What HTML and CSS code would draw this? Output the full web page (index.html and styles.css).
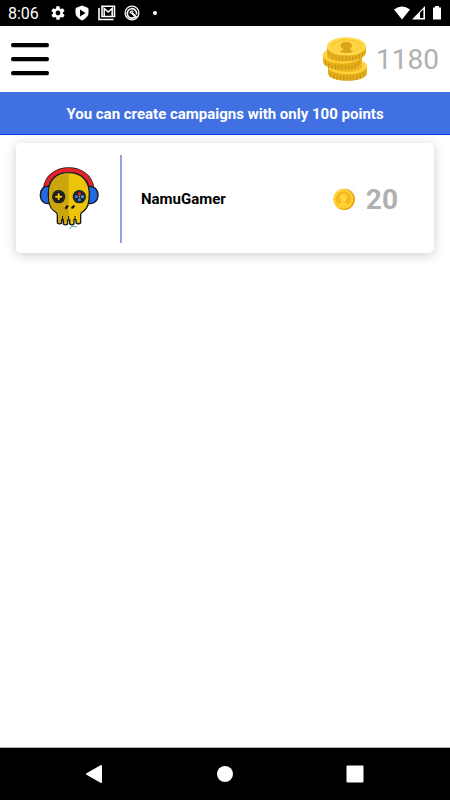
FILE: index.html
```html
<!DOCTYPE html>
<html lang="en">
<head>
<meta charset="utf-8">
<meta name="viewport" content="width=device-width, initial-scale=1">
<title>Campaigns</title>
<link rel="stylesheet" href="styles.css">
</head>
<body>
<div class="status">
  <span class="clock">8:06</span>
  <svg width="16" height="16" viewBox="0 0 24 24" fill="#fff" aria-hidden="true"><path d="M19.4 13c0-.3.1-.6.1-1s0-.7-.1-1l2.100-1.600c.2-.2.200-.4.100-.6l-2-3.500c-.1-.2-.4-.3-.6-.2l-2.500 1c-.5-.4-1.100-.7-1.700-1l-.4-2.600c0-.3-.2-.5-.4-.5h-4c-.3 0-.5.2-.5.400l-.4 2.700c-.6.200-1.100.6-1.700 1l-2.500-1c-.2-.1-.5 0-.6.200l-2 3.500c-.1.200-.1.500.1.600L4.600 11c-.1.300-.1.600-.1 1s0 .7.100 1l-2.100 1.600c-.2.200-.2.400-.1.600l2 3.500c.1.200.4.300.6.200l2.500-1c.5.400 1.100.7 1.700 1l.4 2.600c0 .3.200.5.500.5h4c.2 0 .4-.2.400-.4l.4-2.700c.6-.2 1.200-.6 1.700-1l2.500 1c.2.100.5 0 .6-.2l2-3.500c.1-.2.100-.5-.1-.6zM12 15.600a3.600 3.600 0 1 1 0-7.200 3.600 3.600 0 0 1 0 7.200z"/></svg>
  <svg width="16" height="16" viewBox="0 0 16 16" aria-hidden="true"><path d="M8 1l6 2.400V8c0 3-2.500 5.500-6 7-3.500-1.500-6-4-6-7V3.400z" fill="#fff" stroke="#fff" stroke-linejoin="round"/><path d="M6 4.500v7l5.500-3.500z" fill="#000"/></svg>
  <svg width="18" height="16" viewBox="0 0 18 16" fill="none" stroke="#fff" aria-hidden="true"><path d="M1 3v11.500h14.500" stroke-width="1.600"/><path d="M4 1.200h12.500v10.300H4z" stroke-width="1.600"/><path d="M6.200 11V3.500l4 3.600 4-3.600V11" stroke-width="1.500"/></svg>
  <svg width="16" height="16" viewBox="0 0 16 16" fill="none" stroke="#fff" aria-hidden="true"><circle cx="8" cy="8" r="6.900" stroke-width="1.300"/><path d="M11.300 11.700A4.700 4.700 0 1 1 12.500 9.500" stroke-width="1.700"/><path d="M6 8.500a2.200 2.200 0 0 1 3.500-2" stroke-width="1.200"/><path d="M7.500 7.500l5 5" stroke-width="2"/></svg>
  <span class="dot"></span>
  <svg class="signals" width="48" height="16" viewBox="0 0 48 16" fill="#fff" aria-hidden="true"><path d="M0 4.400Q8-1.600 16 4.400L8 14.500z"/><path d="M31 1v13.500H18z"/><path d="M26 7.700l3.400-3.400V13H26z" fill="#000"/><path d="M41 1h4v1.500h2v12h-8v-12h2z"/></svg>
</div>
<header class="header">
  <button class="menu" aria-label="Open menu"><span></span><span></span><span></span></button>
  <div class="balance">
    <svg width="46" height="46" viewBox="0 0 138 138" role="img" aria-label="Points">
      <path d="M18 90v20c0 32 117 32 117 0V90z" fill="#e4ae19"/>
      <path d="M25 111v13m10-9v14m10-12v14m10-12v14m10-13v14m10-14v14m10-14v14m10-15v14m10-15v14m10-17v14m10-22v13" stroke="#c8951a" stroke-width="3"/>
      <ellipse cx="76" cy="91" rx="59" ry="24" fill="#ffd23d"/><ellipse cx="76" cy="91" rx="45" ry="17" fill="#efb71d"/>
      <path d="M3 58v18c0 33 117 33 117 0V58z" fill="#e4ae19"/>
      <path d="M10 77v12m10-6v13m10-10v14m10-13v14m10-13v14m10-13v14m10-14v14m10-14v14m10-16v14m10-18v14m10-22v13" stroke="#c8951a" stroke-width="3"/>
      <ellipse cx="61" cy="58" rx="59" ry="25" fill="#ffd23d"/><ellipse cx="61" cy="59" rx="46" ry="18" fill="#efb71d"/>
      <path d="M15 31v18c0 34 117 34 117 0V31z" fill="#e8b21c"/>
      <path d="M22 49v12m10-6v13m10-10v14m10-13v14m10-13v14m10-13v14m10-14v14m10-14v14m10-16v14m10-18v14m10-22v13" stroke="#c8951a" stroke-width="3"/>
      <ellipse cx="73.500" cy="31" rx="58.500" ry="27" fill="#ffdb4b"/><ellipse cx="73.500" cy="31" rx="48" ry="21" fill="#f3c133"/><ellipse cx="73.500" cy="32" rx="46" ry="19" fill="#ffd443"/>
      <path d="M72 18c11 0 18 5 18 11 0 4-2 7-6 9l1 4c4 1 7 2 8 5-10 5-29 5-39 0 1-3 5-4 9-5l1-4c-5-2-8-5-8-9 0-6 6-11 16-11z" fill="#dba51b"/>
    </svg>
    <span class="total">1180</span>
  </div>
</header>
<p class="banner">You can create campaigns with only 100 points</p>
<main class="list">
  <article class="card">
    <div class="avatar">
      <svg width="68" height="70" viewBox="0 0 204 210" role="img" aria-label="NamuGamer logo">
        <path d="M29 74C36-1 160-1 167 74" fill="none" stroke="#17191d" stroke-width="16"/>
        <path d="M29 74C36-1 160-1 167 74" fill="none" stroke="#e32329" stroke-width="12"/>
        <path d="M40 68c-17-4-27 8-27 25s11 29 30 25zm116 0c17-4 30 8 30 25s-12 29-32 25z" fill="#2468e3" stroke="#17191d" stroke-width="4"/>
        <path d="M98 26C56 26 37 54 37 90c0 24 4 44 19 52 6 3 8 6 8 10v23c0 6 13 6 13 0v-8h5v11c0 6 13 6 13 0v-10h6v10c0 6 13 6 13 0v-11h6v8c0 6 14 6 14 0v-23c0-4 2-7 8-10 14-8 18-28 18-52 0-36-20-64-62-64z" fill="#ecc40a" stroke="#17191d" stroke-width="4" stroke-linejoin="round"/>
        <path d="M98 28C58 28 39 55 39 90c0 23 4 42 18 50 7 4 9 7 9 12v23c0 3 9 3 9 0v-10h9v12c0 3 9 3 9 0v-11h5z" fill="#cba50e"/>
        <circle cx="68" cy="98" r="20" fill="#17191d"/><circle cx="68" cy="98" r="16" fill="none" stroke="#3a3c32" stroke-width="2"/>
        <circle cx="130" cy="98" r="20" fill="#17191d"/><circle cx="130" cy="98" r="16" fill="none" stroke="#344651" stroke-width="2"/>
        <path d="M68 90v16m-8-8h16" stroke="#ecc40a" stroke-width="6" stroke-linecap="round"/>
        <circle cx="130" cy="90" r="5" fill="#ed3035"/><circle cx="121" cy="98" r="5" fill="#387fc0"/><circle cx="139" cy="98" r="5" fill="#4b97d1"/><circle cx="130" cy="107" r="5" fill="#3a87cb"/><circle cx="130" cy="98" r="2" fill="#ddd"/>
        <path d="M94 127l-4 5m19-1l4-4" stroke="#17191d" stroke-width="7" stroke-linecap="round"/>
        <path d="M79.500 156v11m18.500-11v11m19-11v11" stroke="#17191d" stroke-width="3"/>
        <path d="M102 194c3-8 11-8 20-5" fill="none" stroke="#35919b" stroke-width="3"/>
      </svg>
    </div>
    <h2 class="name">NamuGamer</h2>
    <div class="price">
      <svg width="24" height="24" viewBox="0 0 72 72" role="img" aria-label="Points">
        <path d="M3 10l4-4M62 4l6 8M3 62l4 4M62 67l6-6" stroke="#dedede" stroke-width="2"/>
        <circle cx="37" cy="37" r="32" fill="#e8a816"/><circle cx="34" cy="36" r="30" fill="#ffd02d"/><circle cx="34" cy="36" r="23" fill="#f4b91e"/>
        <path d="M34 20c9 0 13 6 11 14-1 5-3 8-6 10l1 4 10 4c-9 10-25 8-32-1l10-4v-5c-9-7-6-22 6-22z" fill="#ffd33a"/>
        <path d="M10 28c5-12 14-18 27-18" fill="none" stroke="#ffe36a" stroke-width="3"/>
      </svg>
      <span class="cost">20</span>
    </div>
  </article>
</main>
<nav class="nav" aria-label="System">
  <button aria-label="Back"><svg width="18" height="20" viewBox="0 0 18 20"><path d="M15 2v16L1 10z" fill="#fff" stroke="#fff" stroke-width="2" stroke-linejoin="round"/></svg></button>
  <button aria-label="Home"><svg width="18" height="20" viewBox="0 0 18 20"><circle cx="9" cy="10" r="8" fill="#fff"/></svg></button>
  <button aria-label="Recent apps"><svg width="18" height="20" viewBox="0 0 18 20"><rect x="0.500" y="1.500" width="17" height="17" rx="1" fill="#fff"/></svg></button>
</nav>
</body>
</html>
```
FILE: styles.css
```css
* {
  box-sizing: border-box;
}

body {
  margin: 0;
  min-height: 100vh;
  display: flex;
  flex-direction: column;
  background: #fff;
  color: #000;
  font-family: Roboto, "Liberation Sans", sans-serif;
}

button {
  padding: 0;
  border: 0;
  background: none;
}

svg {
  display: block;
  flex: none;
}

.status {
  display: flex;
  align-items: center;
  gap: 8px;
  height: 26px;
  padding: 0 8px;
  background: #000;
  color: #fff;
}

.clock {
  width: 34px;
  padding-top: 2px;
  font-size: 16px;
  line-height: 24px;
}

.dot {
  width: 4px;
  height: 4px;
  margin-left: 5px;
  border-radius: 50%;
  background: #fff;
}

.signals {
  margin-left: auto;
}

.header {
  display: flex;
  align-items: center;
  justify-content: space-between;
  height: 66px;
  padding: 0 11px;
}

.menu {
  display: flex;
  flex-direction: column;
  gap: 10px;
  width: 38px;
}

.menu span {
  height: 4px;
  border-radius: 2px;
  background: #000;
  box-shadow: 0 1px 0 #bbb;
}

.balance {
  display: flex;
  align-items: center;
  gap: 8px;
}

.total,
.cost {
  padding-top: 2px;
  color: #b0b0b0;
  font-size: 28px;
  line-height: 32px;
}

.total {
  font-weight: 400;
}

.cost {
  font-weight: 700;
}

.banner {
  margin: 0;
  padding: 12px 16px 10px;
  border-bottom: 1px solid #0045e0;
  background: #4070e2;
  color: #fff;
  font-size: 15px;
  font-weight: 700;
  line-height: 20px;
  text-align: center;
}

.list {
  flex: 1;
  padding: 8px 16px;
}

.card {
  display: flex;
  align-items: center;
  min-height: 110px;
  padding: 12px 36px 10px 20px;
  border-radius: 5px;
  background: #fff;
  box-shadow: 0 2px 12px rgba(0, 0, 0, 0.2);
}

.avatar {
  display: flex;
  align-items: center;
  width: 86px;
  height: 88px;
  border-right: 2px solid #98a1ec;
}

.name {
  flex: 1;
  margin: 0;
  padding-left: 19px;
  font-size: 15px;
  font-weight: 700;
  line-height: 20px;
}

.price {
  display: flex;
  align-items: center;
  gap: 10px;
}

.nav {
  display: flex;
  align-items: center;
  justify-content: space-between;
  height: 53px;
  padding: 0 86px;
  border-top: 1px solid #aaa;
  background: #000;
}
```
